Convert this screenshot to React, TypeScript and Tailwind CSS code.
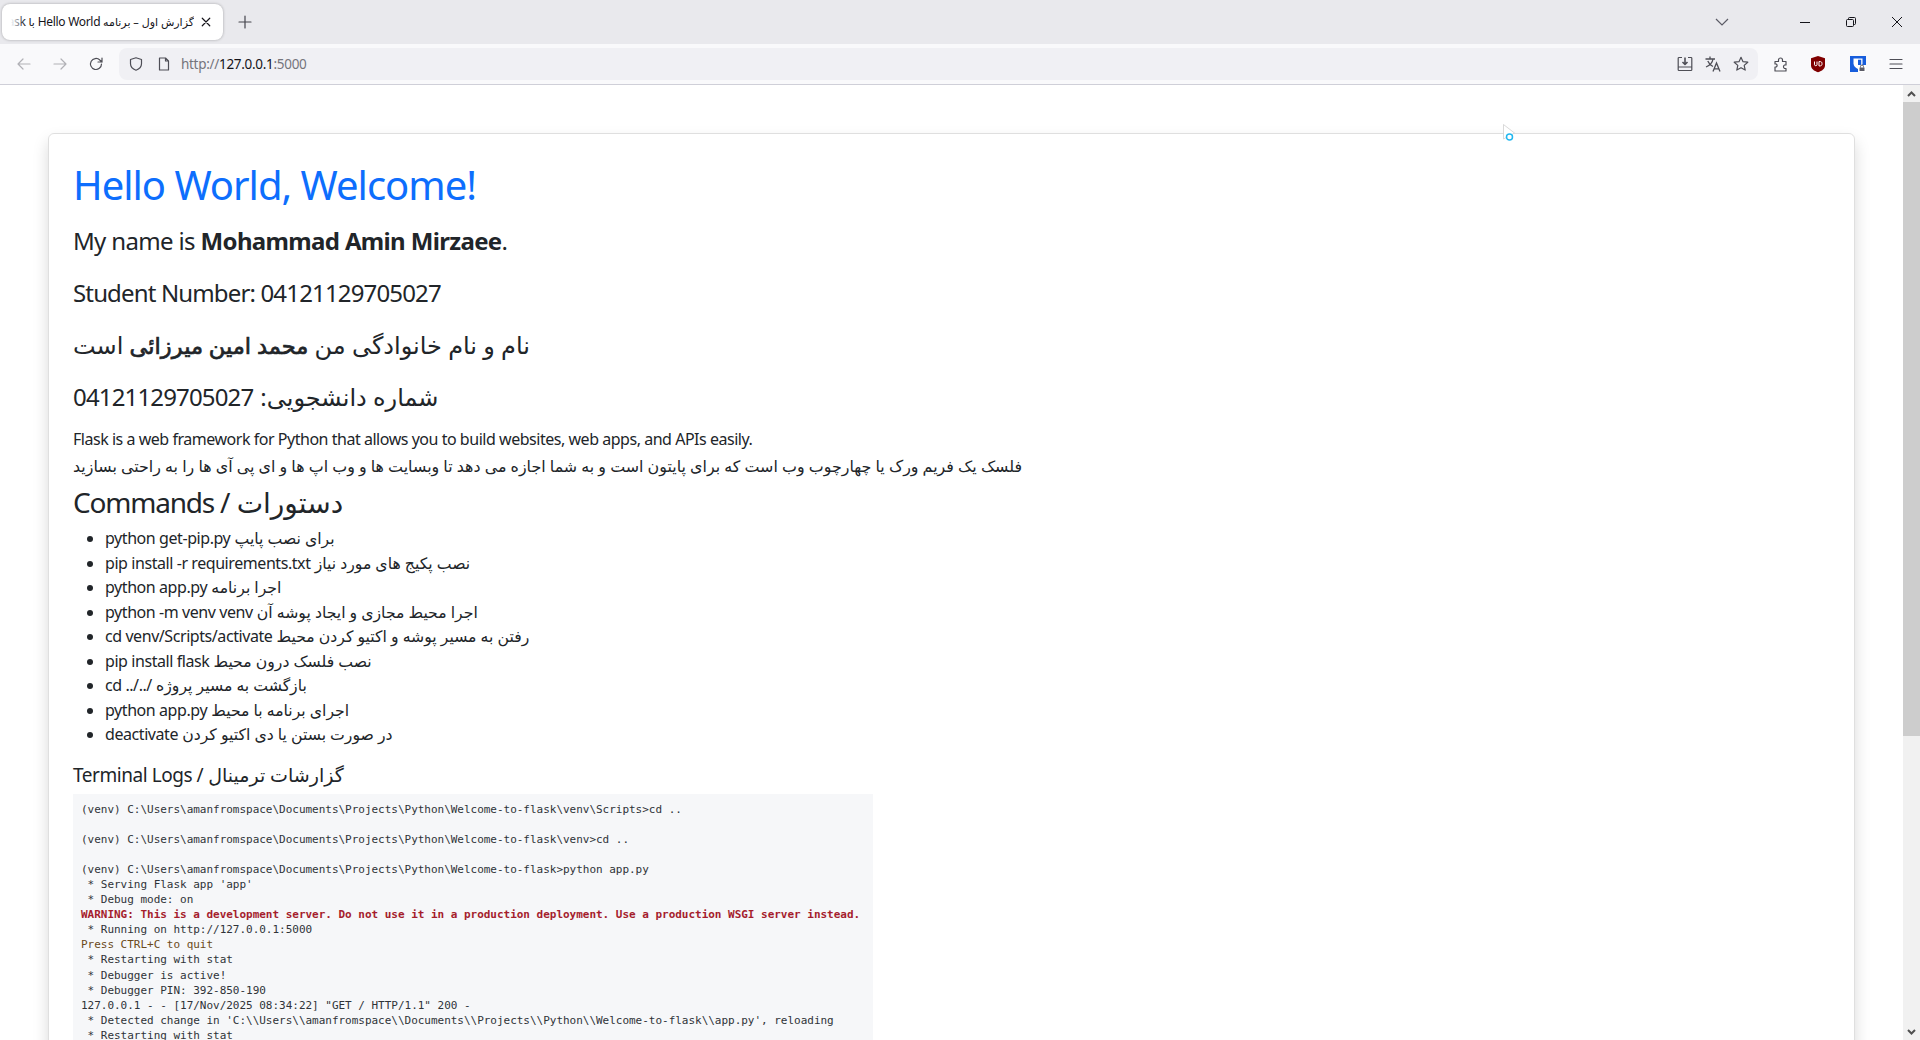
import React from "react";

const sans = "font-['Noto_Sans','DejaVu_Sans',sans-serif]";

const commands: [string, string][] = [
  ["python get-pip.py", "برای نصب پایپ"],
  ["pip install -r requirements.txt", "نصب پکیج های مورد نیاز"],
  ["python app.py", "اجرا برنامه"],
  ["python -m venv venv", "اجرا محیط مجازی و ایجاد پوشه آن"],
  ["cd venv/Scripts/activate", "رفتن به مسیر پوشه و اکتیو کردن محیط"],
  ["pip install flask", "نصب فلسک درون محیط"],
  ["cd ../../", "بازگشت به مسیر پروژه"],
  ["python app.py", "اجرای برنامه با محیط"],
  ["deactivate", "در صورت بستن یا دی اکتیو کردن"],
];

const Icon = ({ children, size = 16, className = "" }: { children: React.ReactNode; size?: number; className?: string }) => (
  <svg width={size} height={size} viewBox="0 0 16 16" fill="none" stroke="currentColor" strokeWidth="1.2" strokeLinecap="round" strokeLinejoin="round" className={className}>
    {children}
  </svg>
);

function TopBar() {
  return (
    <div className="flex h-[44px] shrink-0 items-start bg-[#e9e9ed] pt-1 pl-[2px]">
      <div className="relative flex h-[36px] w-[221px] items-center rounded-lg bg-white pl-[9px] pr-[11px] shadow-[0_0_3px_rgba(0,0,0,0.3)]">
        <div dir="rtl" className={`flex-1 overflow-hidden whitespace-nowrap text-[11px] text-[#15141a] ${sans}`}>
          گزارش اول – برنامه <span className="text-[12px] tracking-[-0.3px]">Hello World</span> با <span className="text-[12px] tracking-[-0.3px]">Flask</span>
        </div>
        <div className="absolute left-[9px] top-0 h-full w-[14px] bg-gradient-to-r from-white to-transparent" />
        <Icon size={12} className="ml-[6px] shrink-0 text-[#15141a]">
          <path d="M3 3l10 10M13 3L3 13" strokeWidth="1.6" />
        </Icon>
      </div>
      <div className="ml-[14px] mt-[10px] text-[#45454d]">
        <Icon><path d="M8 2v12M2 8h12" /></Icon>
      </div>
      <div className="flex-1" />
      <div className="mr-[53px] mt-[14px] text-[#5b5b66]">
        <svg width="14" height="8" viewBox="0 0 14 8" fill="none" stroke="currentColor" strokeWidth="1.2"><path d="M1 1l6 6 6-6" /></svg>
      </div>
      <div className="flex h-[36px] items-center text-[#15141a]">
        <div className="flex w-[46px] justify-center">
          <svg width="10" height="10" viewBox="0 0 10 10" stroke="currentColor"><path d="M0 5.500h10" /></svg>
        </div>
        <div className="flex w-[46px] justify-center">
          <svg width="10" height="10" viewBox="0 0 10 10" fill="none" stroke="currentColor"><rect x="0.5" y="2.5" width="7" height="7" rx="1" /><path d="M2.500 2.500V1.500a1 1 0 0 1 1-1h5a1 1 0 0 1 1 1v5a1 1 0 0 1-1 1h-1" /></svg>
        </div>
        <div className="flex w-[46px] justify-center">
          <svg width="10" height="10" viewBox="0 0 10 10" stroke="currentColor"><path d="M0 0l10 10M10 0L0 10" /></svg>
        </div>
      </div>
    </div>
  );
}

function Toolbar() {
  return (
    <div className="flex h-[41px] shrink-0 items-center border-b border-[#cfcfd8] bg-[#f9f9fb]">
      <div className="ml-[16px] text-[#b1b1b6]">
        <Icon><path d="M14 8H2M7 3L2 8l5 5" /></Icon>
      </div>
      <div className="ml-[20px] text-[#b1b1b6]">
        <Icon><path d="M2 8h12M9 3l5 5-5 5" /></Icon>
      </div>
      <div className="ml-[20px] text-[#4e4e56]">
        <Icon><path d="M13.500 8A5.500 5.500 0 1 1 11.800 4L14 6M14 2v4h-4" /></Icon>
      </div>
      <div className="ml-[15px] flex h-[32px] flex-1 items-center rounded-lg bg-[#f0f0f4]">
        <div className="ml-[9px] text-[#4e4e56]">
          <Icon><path d="M8 1.800l5.500 1.700v4.200c0 3.200-2.400 5.300-5.500 6.500-3.100-1.200-5.500-3.300-5.500-6.500V3.500z" /></Icon>
        </div>
        <div className="ml-[12px] text-[#4e4e56]">
          <Icon><path d="M3.500 2h6l3 3v9h-9zM9.500 2v3h3" /></Icon>
        </div>
        <div className={`ml-[9px] mt-px text-[13.5px] tracking-[-0.3px] text-[#75757c] ${sans}`}>
          http://<span className="text-[#15141a]">127.0.0.1</span>:5000
        </div>
        <div className="flex-1" />
        <div className="text-[#4e4e56]">
          <svg width="16" height="16" viewBox="0 0 16 16" fill="none" stroke="currentColor" strokeWidth="1.2" strokeLinejoin="round"><path d="M5 1.500H2a.8.8 0 0 0-.8.8v11.400c0 .5.3.8.8.8h12c.5 0 .8-.3.8-.8V2.300a.8.8 0 0 0-.8-.8h-3M1.200 11h13.600" /><path d="M8 1.500v6.500M5.500 6L8 8.500 10.500 6" strokeWidth="1.6" /></svg>
        </div>
        <div className="ml-[12px] text-[#4e4e56]">
          <svg width="16" height="16" viewBox="0 0 16 16" fill="none" stroke="currentColor" strokeWidth="1.3"><path d="M0.500 3h9.500M5 0.500V3M8 3C7.500 6.500 4.500 9.500 1 11M2.800 5c1 2.500 3 4.500 5.200 5.500" /><path d="M8 15.500l3.500-8.500 3.500 8.500M9.300 12.800h4.400" /></svg>
        </div>
        <div className="ml-[12px] mr-[9px] text-[#4e4e56]">
          <Icon><path d="M8 1.300l2 4.400 4.800.5-3.600 3.200 1 4.700L8 11.700l-4.200 2.400 1-4.700L1.200 6.200 6 5.700z" /></Icon>
        </div>
      </div>
      <div className="ml-[15px] text-[#4e4e56]">
        <Icon><path d="M2 5.500h3.500V4a2 2 0 0 1 4 0v1.500H13V9h-1.500a2 2 0 0 0 0 3.500H13V15H2v-4h1.200a1.700 1.700 0 0 0 0-3H2z" /></Icon>
      </div>
      <div className="ml-[21px]">
        <svg width="16" height="18" viewBox="0 0 16 18">
          <path d="M8 1l7 2.300v7c0 3.500-3 5.700-7 7-4-1.300-7-3.500-7-7v-7z" fill="#800000" />
          <path d="M4.500 6.500v3.300c0 1.200 2.500 1.200 2.500 0V6.500M9 6.500v4.500c2.600 0 3-.8 3-2.300s-.4-2.200-3-2.200z" fill="none" stroke="#fff" strokeWidth="1" />
        </svg>
      </div>
      <div className="ml-[24px]">
        <svg width="16" height="16" viewBox="0 0 16 16">
          <path d="M0 0h16v16H0z" fill="#175ddc" />
          <path d="M3.500 2.500h9v5c0 2.500-2 4.500-4.500 5.500-2.500-1-4.500-3-4.500-5.500z" fill="#fff" />
          <path d="M8 3.800v7.800c1.800-.9 3.200-2.300 3.200-4V3.800z" fill="#175ddc" />
          <path d="M8 9h8v7H8z" fill="#fff" />
          <path d="M9.500 11.500h5v3.500h-5z" fill="#5b5b66" />
          <path d="M10.500 11.500V10.500a1.500 1.500 0 0 1 3 0v1" fill="none" stroke="#5b5b66" />
        </svg>
      </div>
      <div className="ml-[22px] mr-[16px] text-[#4e4e56]">
        <Icon><path d="M2 3.500h12M2 8h12M2 12.500h12" /></Icon>
      </div>
    </div>
  );
}

function Scrollbar() {
  return (
    <div className="flex h-full w-[17px] shrink-0 flex-col bg-[#f1f1f1]">
      <div className="flex h-[17px] shrink-0 items-center justify-center text-[#505050]">
        <svg width="9" height="6" viewBox="0 0 9 6" fill="none" stroke="currentColor" strokeWidth="2"><path d="M1 5l3.500-3.500L8 5" /></svg>
      </div>
      <div className="h-[634px] shrink-0 bg-[#cdcdcd]" />
      <div className="flex-1" />
      <div className="flex h-[17px] shrink-0 items-center justify-center text-[#505050]">
        <svg width="9" height="6" viewBox="0 0 9 6" fill="none" stroke="currentColor" strokeWidth="2"><path d="M1 1l3.500 3.500L8 1" /></svg>
      </div>
    </div>
  );
}

export default function App() {
  return (
    <div className={`flex h-screen w-full flex-col overflow-hidden bg-white text-[#212529] ${sans}`}>
      <TopBar />
      <Toolbar />
      <div className="relative flex min-h-0 flex-1">
        <div className="min-w-0 flex-1 overflow-hidden pt-[48px] pl-[48px] pr-[48px]">
          <div className="rounded-md border border-[rgba(0,0,0,0.125)] px-6 pt-[27px] shadow-[0_8px_16px_rgba(0,0,0,0.15)]">
            <h1 className="mb-[14px] text-[40px] leading-[48px] tracking-[-1px] text-[#0d6efd]">Hello World, Welcome!</h1>
            <p className="mb-4 text-[24px] leading-[36px] tracking-[-0.65px]">My name is <strong className="font-bold">Mohammad Amin Mirzaee</strong>.</p>
            <p className="mb-4 text-[24px] leading-[36px] tracking-[-0.85px]">Student Number: 04121129705027</p>
            <p className="mb-[15px] text-[24px] leading-[36px]">نام و نام خانوادگی من <strong className="text-[22.5px] font-normal [-webkit-text-stroke:0.7px_#212529]">محمد امین میرزائی</strong> است</p>
            <p className="mb-[11px] flex gap-[7px] text-[24px] leading-[36px]">
              <span className="tracking-[-0.85px]">04121129705027</span>
              <span dir="rtl">شماره دانشجویی:</span>
            </p>
            <p className="text-[16px] leading-[27px] tracking-[-0.47px]">Flask is a web framework for Python that allows you to build websites, web apps, and APIs easily.</p>
            <p className="mb-[5px] text-[15.9px] leading-[27px]">فلسک یک فریم ورک یا چهارچوب وب است که برای پایتون است و به شما اجازه می دهد تا وبسایت ها و وب اپ ها و ای پی آی ها را به راحتی بسازید</p>
            <h3 className="mb-[7px] text-[28px] leading-[34px]"><span className="tracking-[-1.2px]">Commands /</span> دستورات</h3>
            <ul className="mb-4 list-disc pl-8 text-[16px] leading-[24.5px]">
              {commands.map(([en, fa], i) => (
                <li key={i}><span className="tracking-[-0.43px]">{en}</span> <span className="text-[15.7px]">{fa}</span></li>
              ))}
            </ul>
            <h5 className="mb-[7px] text-[19px] leading-[24px]"><span className="tracking-[-0.45px]">Terminal Logs /</span> گزارشات ترمینال</h5>
            <pre className="w-[800px] bg-[#f6f7f9] p-2 font-['DejaVu_Sans_Mono',monospace] text-[11px] leading-[15.1px] tracking-[-0.02px] text-[#2f3338]">
              {`(venv) C:\\Users\\amanfromspace\\Documents\\Projects\\Python\\Welcome-to-flask\\venv\\Scripts>cd ..

(venv) C:\\Users\\amanfromspace\\Documents\\Projects\\Python\\Welcome-to-flask\\venv>cd ..

(venv) C:\\Users\\amanfromspace\\Documents\\Projects\\Python\\Welcome-to-flask>python app.py
 * Serving Flask app 'app'
 * Debug mode: on
`}
              <span className="font-bold text-[#a51d2d]">WARNING: This is a development server. Do not use it in a production deployment. Use a production WSGI server instead.</span>
              {`
 * Running on http://127.0.0.1:5000
`}
              <span className="text-[#6b4a1a]">Press CTRL+C to quit</span>
              {`
 * Restarting with stat
 * Debugger is active!
 * Debugger PIN: 392-850-190
127.0.0.1 - - [17/Nov/2025 08:34:22] "GET / HTTP/1.1" 200 -
 * Detected change in 'C:\\\\Users\\\\amanfromspace\\\\Documents\\\\Projects\\\\Python\\\\Welcome-to-flask\\\\app.py', reloading
 * Restarting with stat`}
            </pre>
          </div>
        </div>
        <Scrollbar />
        <div className="absolute left-[1503px] top-[39px]">
          <svg width="16" height="20" viewBox="0 0 16 20">
            <path d="M0.500 0.500V15L11.500 9z" fill="#fff" stroke="#cfcfcf" strokeWidth="0.8" />
            <circle cx="6.500" cy="13" r="3" fill="#fff" stroke="#22b8f0" strokeWidth="1.500" />
          </svg>
        </div>
      </div>
    </div>
  );
}
